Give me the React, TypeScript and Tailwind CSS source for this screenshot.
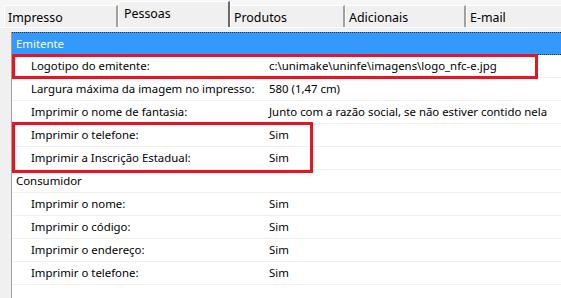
import React from 'react';

// linhas da grade de propriedades
type Row = { label: string; value: string };

const emitente: Row[] = [
  { label: 'Logotipo do emitente:', value: 'c:\\unimake\\uninfe\\imagens\\logo_nfc-e.jpg' },
  { label: 'Largura máxima da imagem no impresso:', value: '580 (1,47 cm)' },
  { label: 'Imprimir o nome de fantasia:', value: 'Junto com a razão social, se não estiver contido nela' },
  { label: 'Imprimir o telefone:', value: 'Sim' },
  { label: 'Imprimir a Inscrição Estadual:', value: 'Sim' },
];

const consumidor: Row[] = [
  { label: 'Imprimir o nome:', value: 'Sim' },
  { label: 'Imprimir o código:', value: 'Sim' },
  { label: 'Imprimir o endereço:', value: 'Sim' },
  { label: 'Imprimir o telefone:', value: 'Sim' },
];

const tabs = [
  { name: 'Impresso', w: 'w-[114px]' },
  { name: 'Pessoas', w: 'w-[112px]', active: true },
  { name: 'Produtos', w: 'w-[115px]' },
  { name: 'Adicionais', w: 'w-[121px]' },
  { name: 'E-mail', w: 'w-[99px]' },
];

const PropRow = ({ row }: { row: Row }) => (
  <div className="flex h-[23px] items-center border-b border-[#f0f0f0] text-[11.4px] text-black">
    <div className="w-[257px] shrink-0 pl-[19px] whitespace-nowrap">{row.label}</div>
    <div className="whitespace-nowrap">{row.value}</div>
  </div>
);

export default function App() {
  return (
    <div
      className="w-[561px] h-[298px] overflow-hidden bg-[#f0f0f0]"
      style={{ fontFamily: '"Noto Sans", "Open Sans", sans-serif' }}
    >
      {/* Abas */}
      <div className="flex h-[27px] items-end pl-[4px] bg-[#f6f6f6]">
        {tabs.map((t) =>
          t.active ? (
            <div
              key={t.name}
              className={`${t.w} h-[26px] shrink-0 bg-[#f0f0f0] border-l border-t border-white border-r-2 border-r-[#696969] pl-[5px] pt-[3px] text-[12.4px] text-black`}
            >
              {t.name}
            </div>
          ) : (
            <div
              key={t.name}
              className={`${t.w} h-[22px] shrink-0 bg-[#f0f0f0] border-l border-t border-white border-r-2 border-r-[#a0a0a0] pl-[3px] pt-[4px] text-[12.4px] leading-[15px] text-black`}
            >
              {t.name}
            </div>
          )
        )}
      </div>

      {/* Painel */}
      <div className="flex pl-[11px] pt-[4px] border-t border-white">
        <div className="relative flex-1 h-[270px] bg-white border-l border-[#a0a0a0]">
          <div className="flex h-[23px] items-center bg-[#3399ff] pl-[4px] text-[11.4px] text-white border-y border-dotted border-[#3a2a10]">
            Emitente
          </div>
          {emitente.map((r) => (
            <PropRow key={r.label} row={r} />
          ))}
          <div className="flex h-[23px] items-center border-b border-[#f0f0f0] pl-[4px] text-[11.4px] text-black">
            Consumidor
          </div>
          {consumidor.map((r) => (
            <PropRow key={r.label + 'c'} row={r} />
          ))}

          {/* destaques em vermelho */}
          <div className="absolute left-0 top-[22px] w-[526px] h-[25px] border-[3px] border-[#e8141f]" />
          <div className="absolute left-0 top-[90px] w-[301px] h-[51px] border-[3px] border-[#e8141f]" />
        </div>
      </div>
    </div>
  );
}
